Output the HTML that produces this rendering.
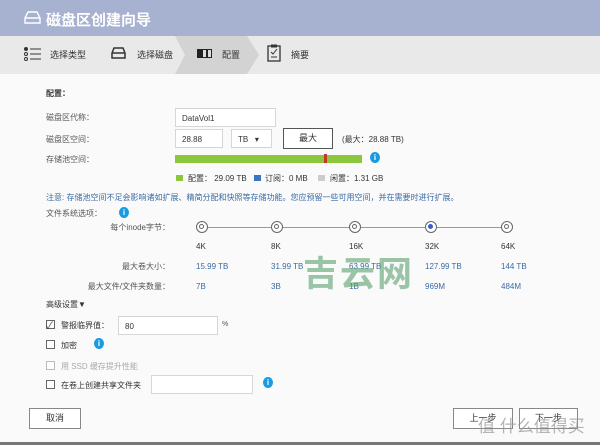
<!DOCTYPE html>
<html><head><meta charset="utf-8"><style>
*{margin:0;padding:0;box-sizing:border-box}
body{width:600px;height:445px;overflow:hidden;background:#fafafa;font-family:"Liberation Sans","Noto Sans CJK SC",sans-serif;font-size:8px;color:#555;position:relative}
.a{position:absolute;white-space:nowrap}
.inp{position:absolute;border:1px solid #d6d6d6;background:#fff;font-size:8px;color:#333;padding:5px 6px;height:19px}
.btn{position:absolute;border:1px solid #888;background:#fff;font-size:9px;color:#333;text-align:center;line-height:19px;height:21px}
.info{position:absolute;width:10px;height:11px;border-radius:50%;background:#1a9be0;color:#fff;font-size:8px;font-weight:bold;text-align:center;line-height:11px}
.cb{position:absolute;width:9px;height:9px;border:1px solid #666;background:#fff}
.rad{position:absolute;width:12px;height:12px;border-radius:50%;border:1.5px solid #666;background:#fff}
.rad i{position:absolute;left:2px;top:2px;width:5px;height:5px;border-radius:50%;border:1px solid #666}
.blue{color:#3a6ba5}
</style></head><body>
<div class="a" style="left:0;top:0;width:600px;height:36px;background:#a7b1d0"></div>
<svg class="a" style="left:24px;top:11px" width="17" height="13"><path d="M1 7 L4 1 H13 L16 7 V12 H1 Z M1 7 H16" fill="none" stroke="#fff" stroke-width="1.4"/></svg>
<div class="a" style="left:46px;top:9px;font-size:15px;font-weight:bold;color:#fff">磁盘区创建向导</div>
<div class="a" style="left:0;top:36px;width:600px;height:38px;background:#e9e9e9"></div>
<svg class="a" style="left:175px;top:36px" width="85" height="38"><polygon points="0,0 72,0 84,19 72,38 0,38 10,19" fill="#d3d3d3"/></svg>
<svg class="a" style="left:24px;top:47px" width="18" height="14"><g fill="none" stroke="#333" stroke-width="1"><circle cx="2" cy="2" r="1.5" fill="#333"/><circle cx="2" cy="7" r="1.5"/><circle cx="2" cy="12" r="1.5"/><path d="M6 2H17M6 7H17M6 12H17"/></g></svg>
<div class="a" style="left:50px;top:48px;font-size:9px;color:#333">选择类型</div>
<svg class="a" style="left:111px;top:47px" width="15" height="12"><path d="M1 6 L3 1 H12 L14 6 V11 H1 Z M1 6 H14" fill="none" stroke="#333" stroke-width="1.5"/></svg>
<div class="a" style="left:137px;top:48px;font-size:9px;color:#333">选择磁盘</div>
<svg class="a" style="left:197px;top:48px" width="16" height="11"><rect x="0" y="1" width="15" height="9" fill="#222"/><rect x="6" y="2" width="3" height="7" fill="#ddd"/><rect x="11" y="2" width="3" height="7" fill="#ddd"/></svg>
<div class="a" style="left:222px;top:48px;font-size:9px;color:#333">配置</div>
<svg class="a" style="left:267px;top:44px" width="14" height="18"><rect x="1" y="2" width="12" height="15" fill="none" stroke="#333" stroke-width="1.3"/><rect x="4" y="0.5" width="6" height="3" fill="#333"/><path d="M4 8 L6 10 L10 5 M4 13H10" stroke="#333" fill="none"/></svg>
<div class="a" style="left:291px;top:48px;font-size:9px;color:#333">摘要</div>

<div class="a" style="left:46px;top:88px;font-weight:bold;color:#333">配置：</div>
<div class="a" style="left:46px;top:112px">磁盘区代称：</div>
<div class="inp" style="left:175px;top:108px;width:101px">DataVol1</div>
<div class="a" style="left:46px;top:134px">磁盘区空间：</div>
<div class="inp" style="left:175px;top:129px;width:48px">28.88</div>
<div class="inp" style="left:231px;top:129px;width:41px">TB &nbsp;&nbsp;▾</div>
<div class="btn" style="left:283px;top:128px;width:50px;border-color:#555">最大</div>
<div class="a" style="left:342px;top:134px;color:#333">(最大：28.88 TB)</div>
<div class="a" style="left:46px;top:154px">存储池空间：</div>
<div class="a" style="left:175px;top:155px;width:187px;height:8px;background:#8cc63e"></div>
<div class="a" style="left:324px;top:154px;width:3px;height:9px;background:#c0392b"></div>
<div class="info" style="left:370px;top:152px">i</div>
<div class="a" style="left:176px;top:175px;width:7px;height:6px;background:#8cc63e"></div>
<div class="a" style="left:188px;top:173px;color:#333">配置： 29.09 TB</div>
<div class="a" style="left:254px;top:175px;width:7px;height:6px;background:#3a74c9"></div>
<div class="a" style="left:265px;top:173px;color:#333">订阅：0 MB</div>
<div class="a" style="left:318px;top:175px;width:7px;height:6px;background:#ccc"></div>
<div class="a" style="left:330px;top:173px;color:#333">闲置：1.31 GB</div>
<div class="a blue" style="left:46px;top:192px">注意: 存储池空间不足会影响诸如扩展、精简分配和快照等存储功能。您应预留一些可用空间，并在需要时进行扩展。</div>
<div class="a" style="left:46px;top:208px">文件系统选项：</div>
<div class="info" style="left:119px;top:207px">i</div>
<div class="a" style="left:110px;top:222px;width:60px;text-align:right">每个inode字节：</div>
<div class="a" style="left:202px;top:227px;width:305px;height:1px;background:#999"></div>
<div class="rad" style="left:196px;top:221px"><i></i></div>
<div class="rad" style="left:271px;top:221px"><i></i></div>
<div class="rad" style="left:349px;top:221px"><i></i></div>
<div class="rad" style="left:425px;top:221px"><i style="background:#3a5bd0;border-color:#3a5bd0"></i></div>
<div class="rad" style="left:501px;top:221px"><i></i></div>
<div class="a" style="left:196px;top:242px;color:#333">4K</div>
<div class="a" style="left:271px;top:242px;color:#333">8K</div>
<div class="a" style="left:349px;top:242px;color:#333">16K</div>
<div class="a" style="left:425px;top:242px;color:#333">32K</div>
<div class="a" style="left:501px;top:242px;color:#333">64K</div>
<div class="a" style="left:100px;top:261px;width:70px;text-align:right">最大卷大小：</div>
<div class="a blue" style="left:196px;top:262px">15.99 TB</div>
<div class="a blue" style="left:271px;top:262px">31.99 TB</div>
<div class="a blue" style="left:349px;top:262px">63.99 TB</div>
<div class="a blue" style="left:425px;top:262px">127.99 TB</div>
<div class="a blue" style="left:501px;top:262px">144 TB</div>
<div class="a" style="left:80px;top:281px;width:90px;text-align:right">最大文件/文件夹数量：</div>
<div class="a blue" style="left:196px;top:282px">7B</div>
<div class="a blue" style="left:271px;top:282px">3B</div>
<div class="a blue" style="left:349px;top:282px">1B</div>
<div class="a blue" style="left:425px;top:282px">969M</div>
<div class="a blue" style="left:501px;top:282px">484M</div>
<div class="a" style="left:303px;top:246px;font-size:35px;font-weight:bold;color:rgba(90,160,110,0.6);letter-spacing:2px">吉云网</div>

<div class="a" style="left:46px;top:299px;color:#333">高级设置▼</div>
<div class="cb" style="left:46px;top:320px"></div>
<div class="a" style="left:46px;top:317px;font-size:10px;color:#444">✓</div>
<div class="a" style="left:61px;top:320px;color:#333">警报临界值：</div>
<div class="inp" style="left:118px;top:316px;width:100px">80</div>
<div class="a" style="left:222px;top:321px;font-size:7px">%</div>
<div class="cb" style="left:46px;top:340px"></div>
<div class="a" style="left:61px;top:340px;color:#333">加密</div>
<div class="info" style="left:94px;top:338px">i</div>
<div class="cb" style="left:46px;top:361px;border-color:#bbb"></div>
<div class="a" style="left:61px;top:361px;color:#aaa">用 SSD 缓存提升性能</div>
<div class="cb" style="left:46px;top:380px"></div>
<div class="a" style="left:61px;top:380px;color:#333">在卷上创建共享文件夹</div>
<div class="inp" style="left:151px;top:375px;width:102px"></div>
<div class="info" style="left:263px;top:377px">i</div>
<div class="btn" style="left:29px;top:408px;width:52px">取消</div>
<div class="btn" style="left:453px;top:408px;width:60px">上一步</div>
<div class="btn" style="left:519px;top:408px;width:59px">下一步</div>
<div class="a" style="left:478px;top:412px;font-size:17px;color:rgba(150,150,150,0.7)">值 什么值得买</div>
<div class="a" style="left:0;top:442px;width:600px;height:3px;background:#777"></div>
</body></html>
